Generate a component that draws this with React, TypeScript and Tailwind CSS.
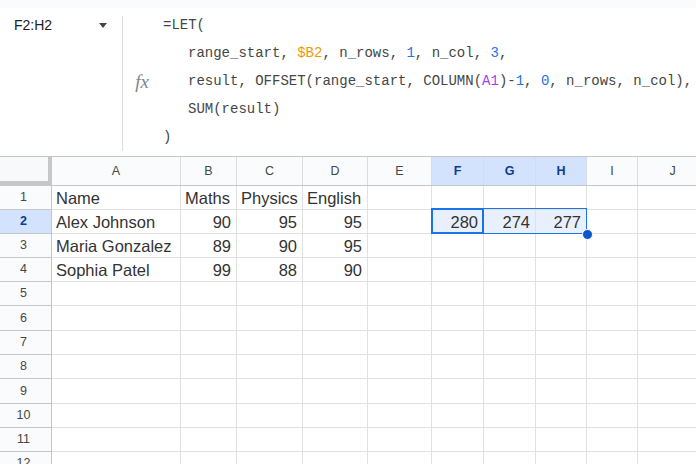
import React from "react";

const cols = [
  { key: "A", w: 129 },
  { key: "B", w: 56 },
  { key: "C", w: 66 },
  { key: "D", w: 65 },
  { key: "E", w: 64 },
  { key: "F", w: 52 },
  { key: "G", w: 52 },
  { key: "H", w: 51 },
  { key: "I", w: 51 },
  { key: "J", w: 70 },
];

const rowHeights = [24, 24, 24, 24, 24, 25, 24, 24, 25, 24, 24, 24];

type Cell = { t: string; num?: boolean };
const data: Record<number, Record<string, Cell>> = {
  1: { A: { t: "Name" }, B: { t: "Maths" }, C: { t: "Physics" }, D: { t: "English" } },
  2: {
    A: { t: "Alex Johnson" },
    B: { t: "90", num: true },
    C: { t: "95", num: true },
    D: { t: "95", num: true },
    F: { t: "280", num: true },
    G: { t: "274", num: true },
    H: { t: "277", num: true },
  },
  3: {
    A: { t: "Maria Gonzalez" },
    B: { t: "89", num: true },
    C: { t: "90", num: true },
    D: { t: "95", num: true },
  },
  4: {
    A: { t: "Sophia Patel" },
    B: { t: "99", num: true },
    C: { t: "88", num: true },
    D: { t: "90", num: true },
  },
};

const selCols = ["F", "G", "H"];

function Formula() {
  const mono = { fontFamily: '"Liberation Mono", "DejaVu Sans Mono", monospace' };
  const O = ({ c }: { c: string }) => <span className="text-[#f29900]">{c}</span>;
  const N = ({ c }: { c: string }) => <span className="text-[#1a73e8]">{c}</span>;
  const P = ({ c }: { c: string }) => <span className="text-[#a142f4]">{c}</span>;
  return (
    <div
      className="flex flex-col pt-[3px] text-[14px] leading-[28px] text-[#444746] whitespace-pre overflow-hidden"
      style={mono}
    >
      <div>=LET(</div>
      <div className="pl-[25px]">
        range_start, <O c="$B2" />, n_rows, <N c="1" />, n_col, <N c="3" />,
      </div>
      <div className="pl-[25px]">
        result, OFFSET(range_start, COLUMN(<P c="A1" />)-<N c="1" />, <N c="0" />, n_rows, n_col),
      </div>
      <div className="pl-[25px]">SUM(result)</div>
      <div>)</div>
    </div>
  );
}

export default function App() {
  const sans = { fontFamily: '"Liberation Sans", Arial, sans-serif' };
  return (
    <div className="relative w-[696px] h-[464px] overflow-hidden bg-white" style={sans}>
      {/* top strip */}
      <div className="h-[8px] bg-[#f9fbfd]" />
      {/* formula bar */}
      <div className="flex h-[148px]">
        <div className="flex w-[122px] shrink-0 items-start justify-between pl-[14px] pr-[15px] pt-[8px]">
          <span className="text-[14px] leading-[18px] text-[#202124]">F2:H2</span>
          <svg width="8" height="5" viewBox="0 0 8 5" className="mt-[7px]">
            <path d="M0 0 L8 0 L4 5 Z" fill="#444746" />
          </svg>
        </div>
        <div className="flex flex-col pt-[8px] pb-[5px]">
          <div className="w-px flex-1 bg-[#dadce0]" />
        </div>
        <div className="flex w-[40px] shrink-0 items-center justify-center pr-[2px]">
          <span
            className="text-[19px] italic text-[#80868b]"
            style={{ fontFamily: '"Liberation Serif", "Times New Roman", serif' }}
          >
            fx
          </span>
        </div>
        <Formula />
      </div>

      {/* grid */}
      <div className="border-t border-[#c4c7c5]">
        {/* header row */}
        <div className="flex h-[29px] border-b border-[#c4c7c5]">
          <div className="w-[52px] shrink-0 bg-[#f8f9fa] border-r-[4px] border-b-[4px] border-[#c7c7c7]" />
          {cols.map((c) => {
            const sel = selCols.includes(c.key);
            return (
              <div
                key={c.key}
                className={`flex shrink-0 items-center justify-center border-r border-[#dadce0] text-[12.5px] ${
                  sel ? "bg-[#d3e3fd] font-bold text-[#0b3d91]" : "bg-[#f9fbfd] text-[#444746]"
                }`}
                style={{ width: c.w }}
              >
                {c.key}
              </div>
            );
          })}
        </div>
        {/* rows */}
        {rowHeights.map((h, i) => {
          const r = i + 1;
          const rowSel = r === 2;
          return (
            <div key={r} className="flex" style={{ height: h }}>
              <div
                className={`flex w-[52px] shrink-0 items-center justify-center pr-[4px] border-r border-b border-[#c4c7c5] text-[12.5px] ${
                  rowSel ? "bg-[#d3e3fd] font-bold text-[#0b3d91]" : "bg-[#f9fbfd] text-[#444746]"
                }`}
              >
                {r}
              </div>
              {cols.map((c) => {
                const cell = data[r]?.[c.key];
                const inSel = rowSel && selCols.includes(c.key);
                return (
                  <div
                    key={c.key}
                    className={`flex shrink-0 items-center overflow-hidden whitespace-nowrap border-r border-b border-[#e1e1e1] pt-[2px] text-[16.5px] text-[#333333] ${
                      cell?.num ? "justify-end pr-[5px]" : "justify-start pl-[4px]"
                    } ${inSel ? "bg-[#e8f0fe]" : "bg-white"}`}
                    style={{ width: c.w }}
                  >
                    {cell?.t}
                  </div>
                );
              })}
            </div>
          );
        })}
      </div>

      {/* selection overlay */}
      <div className="pointer-events-none absolute left-[431px] top-[208px] h-[26px] w-[156px] border border-[#1a73e8]" />
      <div className="pointer-events-none absolute left-[431px] top-[208px] h-[26px] w-[53px] border-2 border-[#1a73e8]" />
      <div className="pointer-events-none absolute left-[582px] top-[229px] h-[11px] w-[11px] rounded-full bg-[#0b57d0] border border-white" />
    </div>
  );
}
